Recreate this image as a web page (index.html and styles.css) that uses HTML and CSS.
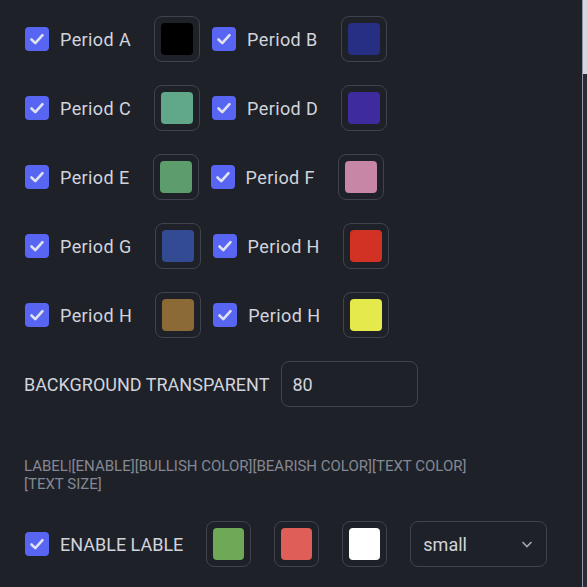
FILE: index.html
```html
<!DOCTYPE html>
<html lang="en">
<head>
    <meta charset="UTF-8">
    <meta name="viewport" content="width=device-width, initial-scale=1.0">
    <title>Settings</title>
    <link rel="stylesheet" href="styles.css">
</head>
<body>

    <div class="panel">
        <div class="row">
            <label class="check"><span class="box"><svg viewBox="0 0 24 24"><path d="M6.5 12.5l3.8 3.6 7.2-8"/></svg></span><span class="text period">Period A</span></label>
            <button class="swatch"><span style="background:#000000"></span></button>
            <label class="check"><span class="box"><svg viewBox="0 0 24 24"><path d="M6.5 12.5l3.8 3.6 7.2-8"/></svg></span><span class="text period">Period B</span></label>
            <button class="swatch"><span style="background:#262f83"></span></button>
        </div>
        <div class="row">
            <label class="check"><span class="box"><svg viewBox="0 0 24 24"><path d="M6.5 12.5l3.8 3.6 7.2-8"/></svg></span><span class="text period">Period C</span></label>
            <button class="swatch"><span style="background:#60a889"></span></button>
            <label class="check"><span class="box"><svg viewBox="0 0 24 24"><path d="M6.5 12.5l3.8 3.6 7.2-8"/></svg></span><span class="text period">Period D</span></label>
            <button class="swatch"><span style="background:#3e2c9f"></span></button>
        </div>
        <div class="row">
            <label class="check"><span class="box"><svg viewBox="0 0 24 24"><path d="M6.5 12.5l3.8 3.6 7.2-8"/></svg></span><span class="text period">Period E</span></label>
            <button class="swatch"><span style="background:#5c9d6b"></span></button>
            <label class="check"><span class="box"><svg viewBox="0 0 24 24"><path d="M6.5 12.5l3.8 3.6 7.2-8"/></svg></span><span class="text period">Period F</span></label>
            <button class="swatch"><span style="background:#c886a5"></span></button>
        </div>
        <div class="row">
            <label class="check"><span class="box"><svg viewBox="0 0 24 24"><path d="M6.5 12.5l3.8 3.6 7.2-8"/></svg></span><span class="text period">Period G</span></label>
            <button class="swatch"><span style="background:#324b92"></span></button>
            <label class="check"><span class="box"><svg viewBox="0 0 24 24"><path d="M6.5 12.5l3.8 3.6 7.2-8"/></svg></span><span class="text period">Period H</span></label>
            <button class="swatch"><span style="background:#d13224"></span></button>
        </div>
        <div class="row">
            <label class="check"><span class="box"><svg viewBox="0 0 24 24"><path d="M6.5 12.5l3.8 3.6 7.2-8"/></svg></span><span class="text period">Period H</span></label>
            <button class="swatch"><span style="background:#8c6a35"></span></button>
            <label class="check"><span class="box"><svg viewBox="0 0 24 24"><path d="M6.5 12.5l3.8 3.6 7.2-8"/></svg></span><span class="text period">Period H</span></label>
            <button class="swatch"><span style="background:#e6e94b"></span></button>
        </div>

        <div class="row">
            <span class="field-label">BACKGROUND TRANSPARENT</span>
            <div class="number-input">80</div>
        </div>

        <div class="hint">LABEL|[ENABLE][BULLISH COLOR][BEARISH COLOR][TEXT COLOR]<br>[TEXT SIZE]</div>

        <div class="row label-row">
            <label class="check"><span class="box"><svg viewBox="0 0 24 24"><path d="M6.5 12.5l3.8 3.6 7.2-8"/></svg></span><span class="text">ENABLE LABLE</span></label>
            <button class="swatch"><span style="background:#6ea957"></span></button>
            <button class="swatch"><span style="background:#df5e58"></span></button>
            <button class="swatch"><span style="background:#ffffff"></span></button>
            <div class="select">
                <span>small</span>
                <svg viewBox="0 0 18 18"><path d="M4.5 7l4.5 4.5L13.5 7"/></svg>
            </div>
        </div>
    </div>

    <div class="scrollbar"><div class="thumb"></div></div>

</body>
</html>
```

FILE: styles.css
```css
body {
    margin: 0;
    background-color: #1f2129;
    color: #d1d4dc;
    font-family: Roboto, "Liberation Sans", sans-serif;
    font-size: 18px;
    overflow: hidden;
}
.panel {
    padding: 16px 24px;
}
.row {
    display: flex;
    align-items: center;
    margin-bottom: 23px;
}
.check {
    display: flex;
    align-items: center;
    margin-right: 23px;
}
.period {
    letter-spacing: 0.4px;
}
.box {
    width: 24px;
    height: 24px;
    border-radius: 4px;
    background-color: #5865f3;
    display: flex;
    align-items: center;
    justify-content: center;
    margin-left: 1px;
    margin-right: 11px;
}
.box svg {
    width: 24px;
    height: 24px;
    fill: none;
    stroke: #dfe2ee;
    stroke-width: 2.6;
    stroke-linecap: round;
    stroke-linejoin: round;
}
.swatch {
    width: 46px;
    height: 46px;
    padding: 6px;
    border: 1px solid #40434d;
    border-radius: 8px;
    background: transparent;
    margin-right: 11px;
    flex-shrink: 0;
}
.swatch span {
    display: block;
    width: 100%;
    height: 100%;
    border-radius: 4px;
}
.label-row .swatch {
    width: 45px;
    margin-right: 23px;
}
.field-label {
    margin-right: 12px;
}
.number-input {
    width: 137px;
    height: 46px;
    box-sizing: border-box;
    border: 1px solid #40434d;
    border-radius: 8px;
    padding: 0 10px;
    display: flex;
    align-items: center;
}
.hint {
    margin-top: 51px;
    margin-bottom: 28px;
    font-size: 15px;
    line-height: 17.5px;
    color: #858892;
}
.select {
    width: 137px;
    height: 46px;
    box-sizing: border-box;
    border: 1px solid #40434d;
    border-radius: 8px;
    padding: 0 10px 0 12px;
    display: flex;
    align-items: center;
    justify-content: space-between;
}
.select svg {
    width: 18px;
    height: 18px;
    fill: none;
    stroke: #a3a6af;
    stroke-width: 1.6;
}
.scrollbar {
    position: fixed;
    top: 0;
    right: 0;
    width: 4px;
    height: 100%;
    background-color: #2a2d35;
    border-left: 1px solid #9598a1;
}
.thumb {
    height: 74px;
    background-color: #d3d7df;
}
```
